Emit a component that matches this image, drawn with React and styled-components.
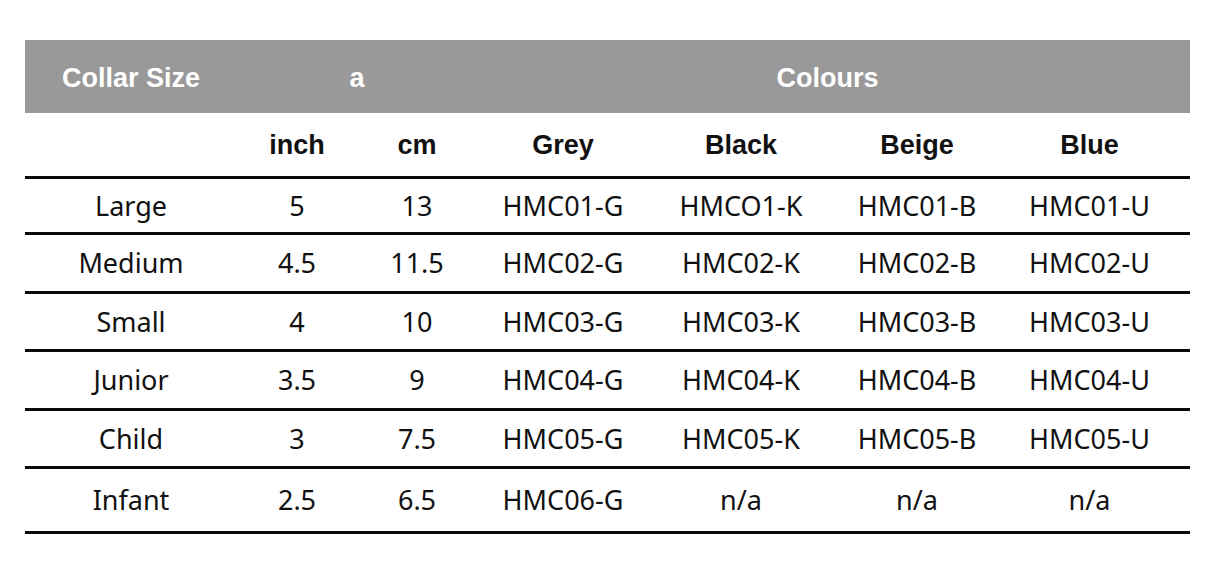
import React from "react";
import styled, { createGlobalStyle } from "styled-components";

const Global = createGlobalStyle`
  html, body { margin: 0; padding: 0; background: #fff; }
  body { width: 1224px; height: 575px; overflow: hidden; }
`;

const Page = styled.div`
  padding: 40px 34px 0 25px;
`;

const Table = styled.table`
  width: 1165px;
  border-collapse: collapse;
  table-layout: fixed;
  color: #111;
`;

const BandRow = styled.tr`
  background: #999999;
  height: 73px;
`;

const headCell = `
  font-family: "Liberation Sans", Arial, sans-serif;
  font-weight: 700;
  font-size: 27px;
  text-align: center;
  vertical-align: middle;
`;

const BandCell = styled.th`
  ${headCell}
  color: #fff;
  padding: 3px ${(p) => (p.$end ? 12 : 0)}px 0 0;
`;

const SubRow = styled.tr`
  height: 64px;
  border-bottom: 3px solid #0a0a0a;
`;

const SubCell = styled.th`
  ${headCell}
  padding: 3px ${(p) => (p.$end ? 12 : 0)}px 0 0;
`;

const Row = styled.tr`
  height: ${(p) => p.$h}px;
  border-bottom: 3px solid #0a0a0a;
`;

const Cell = styled.td`
  padding: 0 ${(p) => (p.$end ? 12 : 0)}px 0 0;
  font-family: "Noto Sans", "DejaVu Sans", sans-serif;
  font-weight: 400;
  font-size: 27px;
  text-align: center;
  vertical-align: middle;
`;

const widths = [212, 120, 120, 172, 184, 168, 189];

const rows = [
  { h: 56, cells: ["Large", "5", "13", "HMC01-G", "HMCO1-K", "HMC01-B", "HMC01-U"] },
  { h: 59, cells: ["Medium", "4.5", "11.5", "HMC02-G", "HMC02-K", "HMC02-B", "HMC02-U"] },
  { h: 58, cells: ["Small", "4", "10", "HMC03-G", "HMC03-K", "HMC03-B", "HMC03-U"] },
  { h: 59, cells: ["Junior", "3.5", "9", "HMC04-G", "HMC04-K", "HMC04-B", "HMC04-U"] },
  { h: 58, cells: ["Child", "3", "7.5", "HMC05-G", "HMC05-K", "HMC05-B", "HMC05-U"] },
  { h: 65, cells: ["Infant", "2.5", "6.5", "HMC06-G", "n/a", "n/a", "n/a"] },
];

const subHeads = ["", "inch", "cm", "Grey", "Black", "Beige", "Blue"];

export default function App() {
  return (
    <>
      <Global />
      <Page>
        <Table>
          <colgroup>
            {widths.map((w, i) => (
              <col key={i} style={{ width: w }} />
            ))}
          </colgroup>
          <thead>
            <BandRow>
              <BandCell>Collar Size</BandCell>
              <BandCell colSpan={2}>a</BandCell>
              <BandCell colSpan={4} $end>
                Colours
              </BandCell>
            </BandRow>
            <SubRow>
              {subHeads.map((h, j) => (
                <SubCell key={j} $end={j === subHeads.length - 1}>
                  {h}
                </SubCell>
              ))}
            </SubRow>
          </thead>
          <tbody>
            {rows.map((r, i) => (
              <Row key={i} $h={r.h}>
                {r.cells.map((c, j) => (
                  <Cell key={j} $end={j === r.cells.length - 1}>
                    {c}
                  </Cell>
                ))}
              </Row>
            ))}
          </tbody>
        </Table>
      </Page>
    </>
  );
}
